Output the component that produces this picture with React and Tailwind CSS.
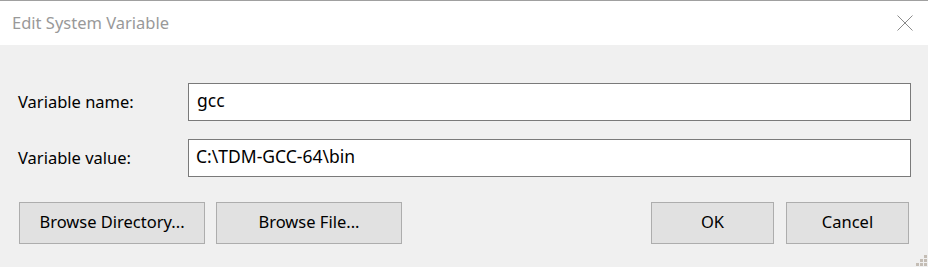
import React from "react";

const font = { fontFamily: '"Noto Sans", "Open Sans", sans-serif' };

function Grip() {
  const dots = [
    [8, 0],
    [4, 4], [8, 4],
    [0, 8], [4, 8], [8, 8],
  ];
  return (
    <svg className="absolute right-[1px] bottom-[1px]" width="11" height="11" viewBox="0 0 11 11">
      {dots.map(([x, y], i) => (
        <rect key={i} x={x} y={y} width="3" height="3" fill="#c4bdb5" />
      ))}
    </svg>
  );
}

export default function App() {
  return (
    <div
      className="relative w-[928px] h-[267px] overflow-hidden bg-[#f0f0f0] border-t border-[#a0a0a0] text-[16.5px] text-black"
      style={font}
    >
      <div className="h-[44px] bg-white flex items-center justify-between pl-[12px] pr-[15px]">
        <span className="text-[#999999] text-[16.5px] pt-[1px]">Edit System Variable</span>
        <svg width="16" height="16" viewBox="0 0 16 16">
          <path d="M0.5 0.5 L15.5 15.5 M15.5 0.5 L0.5 15.5" stroke="#8a8a8a" strokeWidth="1" fill="none" />
        </svg>
      </div>

      <div className="pt-[38px] pl-[18px] pr-[17px]">
        <div className="flex items-center h-[38px]">
          <span className="w-[170px]">Variable name:</span>
          <div className="flex-1 h-full bg-white border border-[#7a7a7a] flex items-center pl-[8px] pb-[3px] text-[17.5px]">
            gcc
          </div>
        </div>
        <div className="flex items-center h-[38px] mt-[18px]">
          <span className="w-[170px]">Variable value:</span>
          <div className="flex-1 h-full bg-white border border-[#7a7a7a] flex items-center pl-[7px] pb-[3px] text-[17.5px]">
            C:\TDM-GCC-64\bin
          </div>
        </div>
      </div>

      <div className="flex items-center pl-[19px] pr-[19px] mt-[25px]">
        <div className="w-[186px] h-[42px] bg-[#e1e1e1] border border-[#adadad] flex items-center justify-center pb-[1px]">
          Browse Directory...
        </div>
        <div className="w-[186px] h-[42px] ml-[11px] bg-[#e1e1e1] border border-[#adadad] flex items-center justify-center pb-[1px]">
          Browse File...
        </div>
        <div className="flex-1" />
        <div className="w-[123px] h-[42px] bg-[#e1e1e1] border border-[#adadad] flex items-center justify-center pb-[1px]">
          OK
        </div>
        <div className="w-[123px] h-[42px] ml-[12px] bg-[#e1e1e1] border border-[#adadad] flex items-center justify-center pb-[1px]">
          Cancel
        </div>
      </div>

      <Grip />
    </div>
  );
}
